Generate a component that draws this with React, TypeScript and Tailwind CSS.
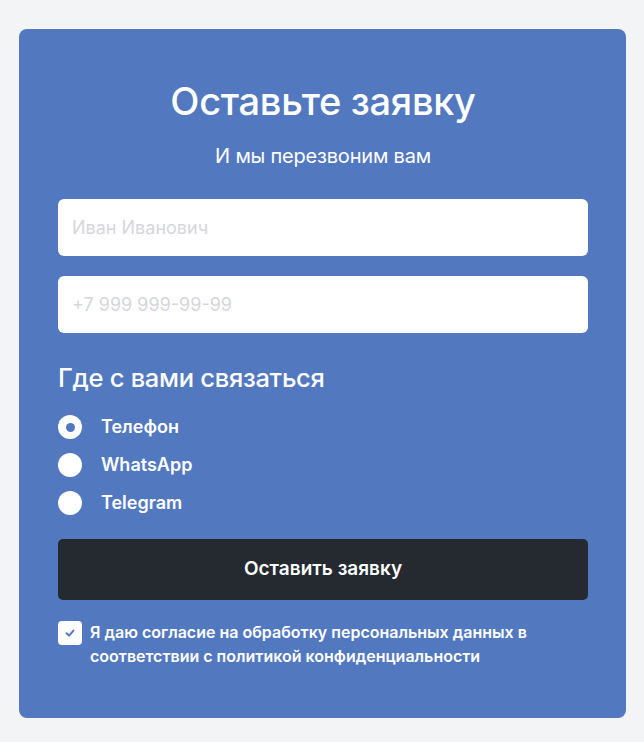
import React, { useState } from 'react';

const options = ['Телефон', 'WhatsApp', 'Telegram'];

export default function App() {
  const [contact, setContact] = useState('Телефон');
  const [agree, setAgree] = useState(true);

  return (
    <div className="min-h-screen bg-[#f3f4f6] pt-[29px] pl-[19px] pr-[18px] pb-[26px] font-['Inter',sans-serif]">
      <form
        className="bg-[#5279c0] rounded-[8px] pl-[39px] pr-[38px] pt-[48px] pb-[50px] text-white"
        onSubmit={(e) => e.preventDefault()}
      >
        <h1 className="text-center text-[38px] leading-[48px] font-medium tracking-[-0.3px]">Оставьте заявку</h1>
        <p className="text-center text-[20px] leading-[28px] mt-[17px] tracking-[-0.2px]">И мы перезвоним вам</p>

        <div className="flex flex-col gap-[20px] mt-[29px]">
          <input
            className="h-[57px] w-full rounded-[6px] bg-white px-[14px] text-[18px] text-gray-800 placeholder:text-[#d6d6db] outline-none"
            placeholder="Иван Иванович"
          />
          <input
            className="h-[57px] w-full rounded-[6px] bg-white px-[14px] text-[18px] text-gray-800 placeholder:text-[#d6d6db] outline-none"
            placeholder="+7 999 999-99-99"
          />
        </div>

        <h2 className="text-[25.5px] leading-[32px] font-medium mt-[29px] tracking-[-0.3px]">Где с вами связаться</h2>

        <div className="flex flex-col gap-[14px] mt-[21px]">
          {options.map((o) => (
            <label key={o} className="flex items-center gap-[19px] cursor-pointer" onClick={() => setContact(o)}>
              <span className="w-[24px] h-[24px] rounded-full bg-white flex items-center justify-center">
                {contact === o && <span className="w-[9px] h-[9px] rounded-full bg-[#5279c0]" />}
              </span>
              <span className="text-[18px] leading-[24px] font-semibold">{o}</span>
            </label>
          ))}
        </div>

        <button
          type="submit"
          className="mt-[24px] w-full h-[61px] rounded-[5px] bg-[#252a31] text-[19px] font-semibold"
        >
          Оставить заявку
        </button>

        <label className="flex items-start gap-[8px] mt-[20px] cursor-pointer" onClick={() => setAgree(!agree)}>
          <span className="mt-[1px] w-[24px] h-[24px] shrink-0 rounded-[4px] bg-white flex items-center justify-center">
            {agree && (
              <svg width="12" height="12" viewBox="0 0 12 12" fill="none">
                <path d="M2.5 6.3 L5 8.6 L9.5 3.6" stroke="#5279c0" strokeWidth="2" strokeLinecap="round" strokeLinejoin="round" />
              </svg>
            )}
          </span>
          <span className="text-[16px] leading-[24px] font-semibold">
            Я даю согласие на обработку персональных данных в соответствии с политикой конфиденциальности
          </span>
        </label>
      </form>
    </div>
  );
}
